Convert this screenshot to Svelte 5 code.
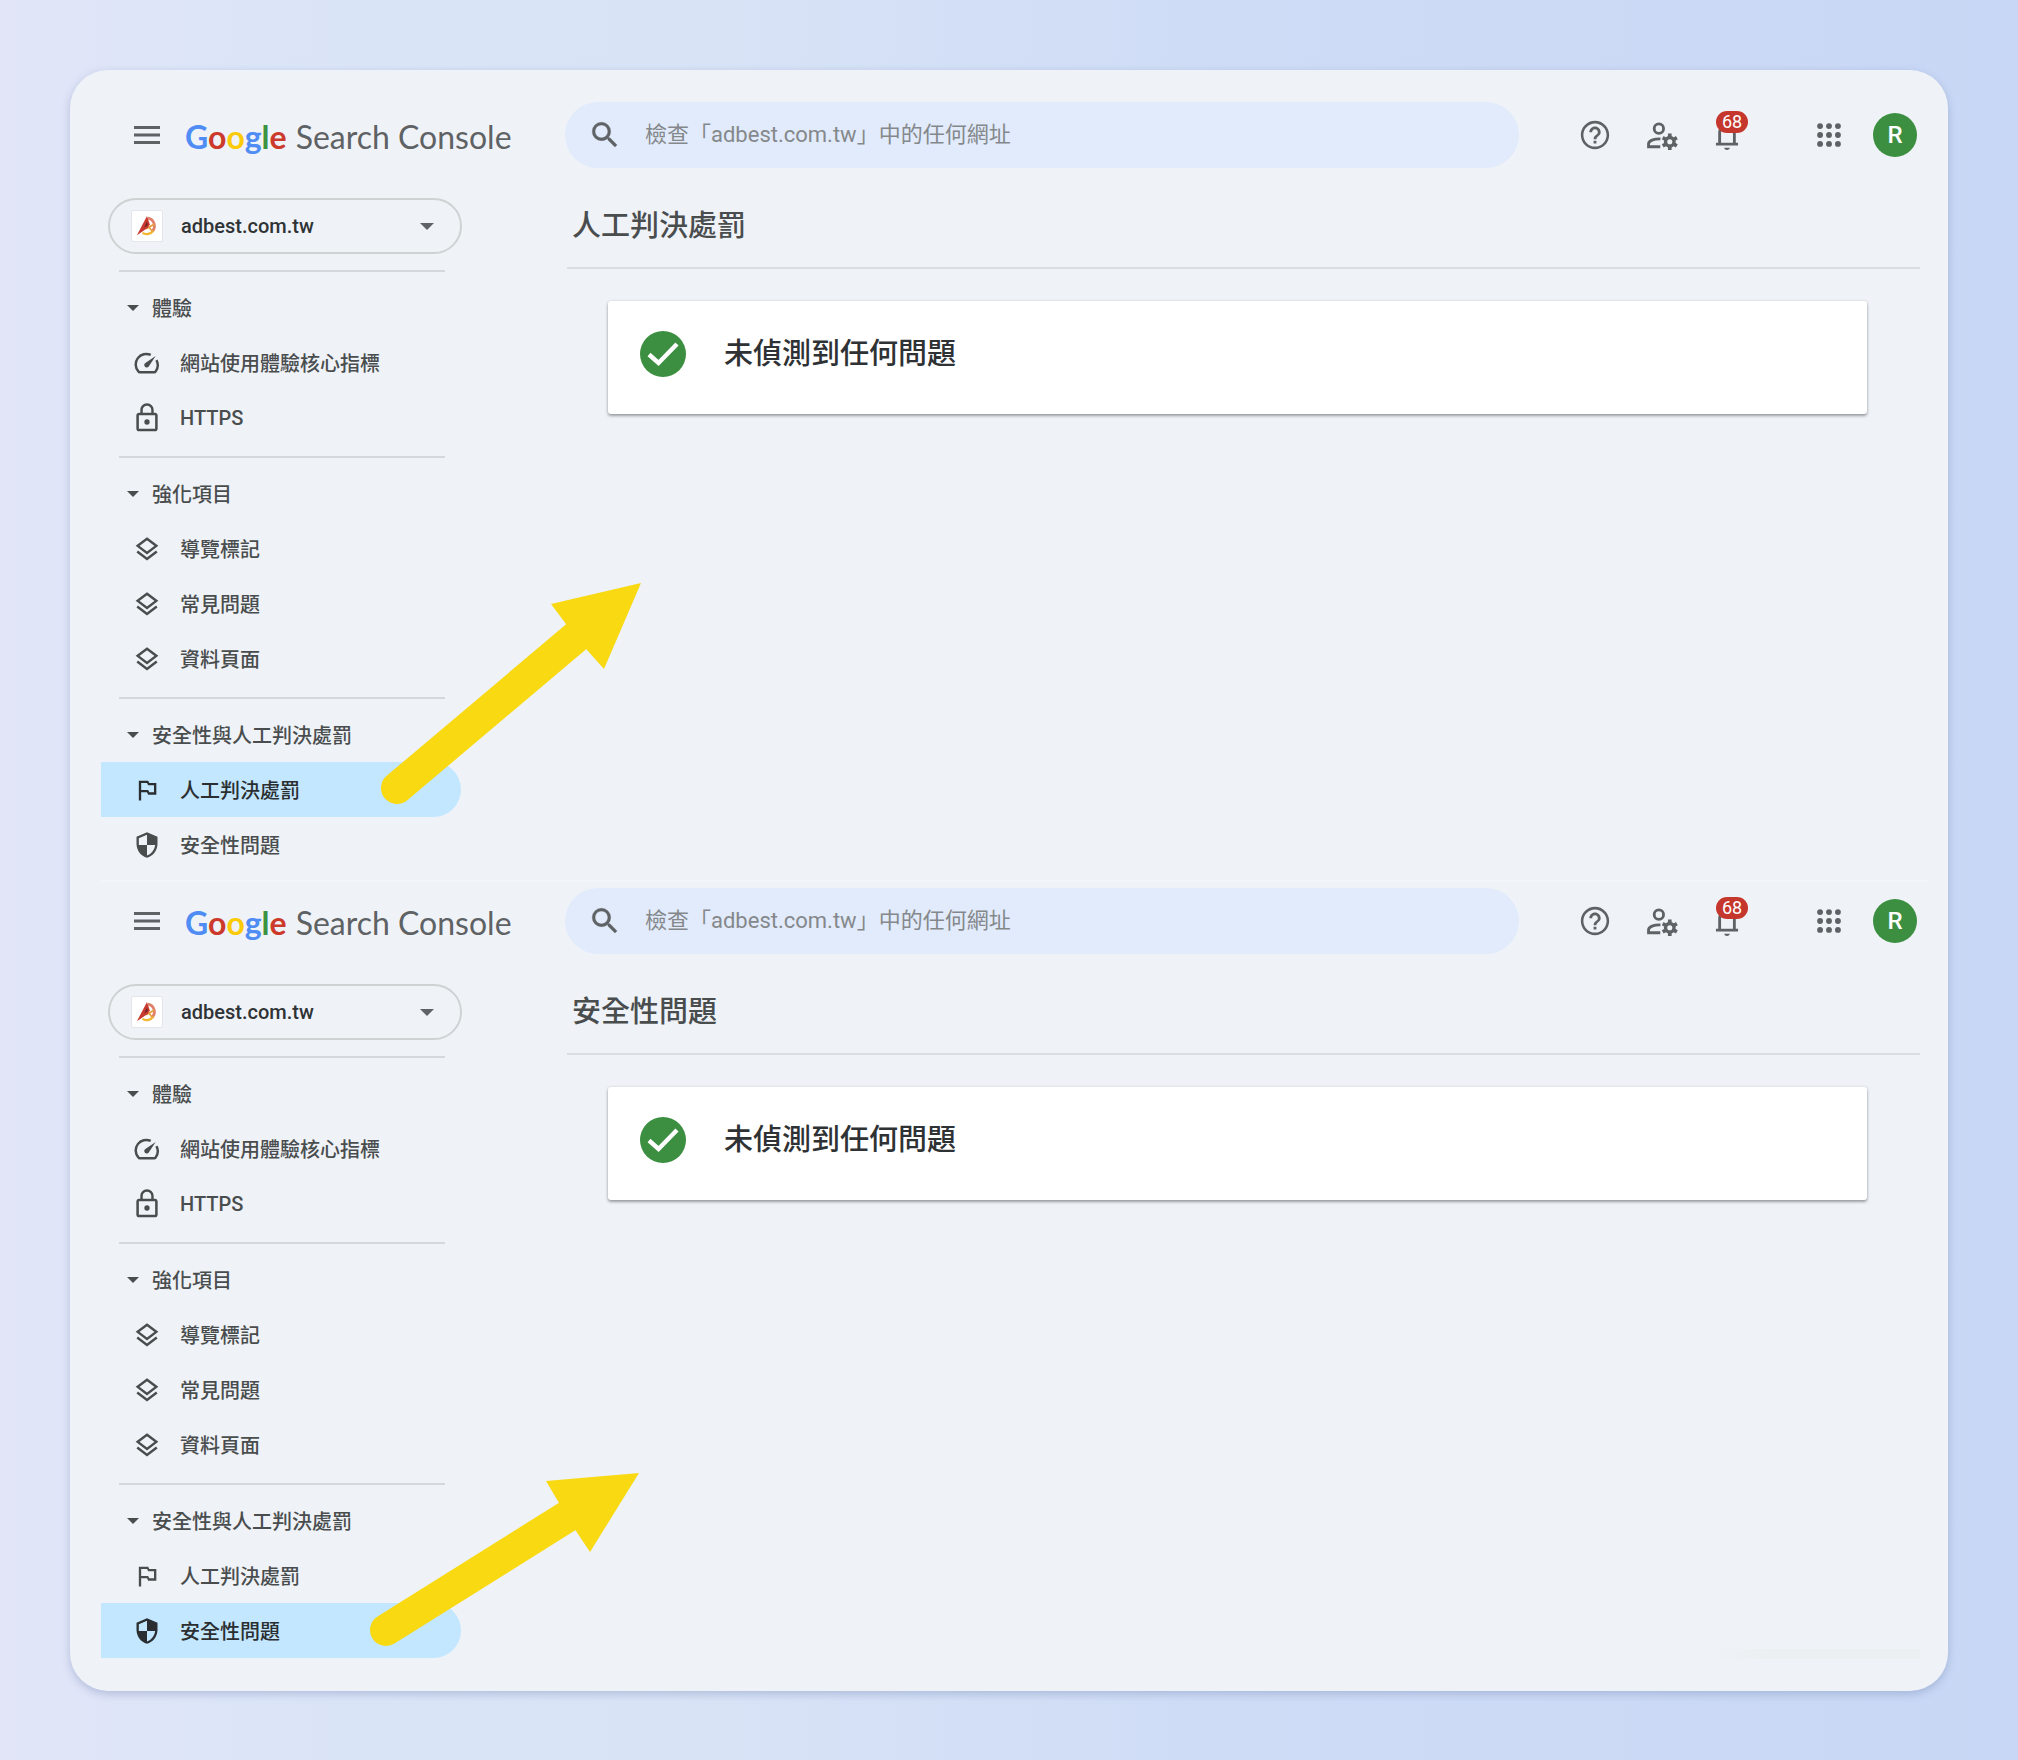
<script>
  const groups = [
    { title: '體驗', items: [
      { label: '網站使用體驗核心指標', icon: 'speed' },
      { label: 'HTTPS', icon: 'lock' },
    ] },
    { title: '強化項目', items: [
      { label: '導覽標記', icon: 'layers' },
      { label: '常見問題', icon: 'layers' },
      { label: '資料頁面', icon: 'layers' },
    ] },
    { title: '安全性與人工判決處罰', items: [
      { label: '人工判決處罰', icon: 'flag' },
      { label: '安全性問題', icon: 'shield' },
    ] },
  ];

  const panels = [
    { id: 'manual', page: '人工判決處罰', line: 'M26 214L206 62', head: '270,9 180,30 195,50 216,76 233,95' },
    { id: 'security', page: '安全性問題', line: 'M15 268L197 154', head: '268,111 175,119 188,141 205,169 219,190' },
  ];

  const logo = [['G', 'blue'], ['o', 'red'], ['o', 'yellow'], ['g', 'blue'], ['l', 'green'], ['e', 'red']];
  const dots = [5, 12, 19];
</script>

{#snippet navIcon(name)}
  {#if name === 'speed'}
    <svg class="i28" viewBox="0 0 24 24" aria-hidden="true">
      <path d="M15.200 4.500A9 9 0 0 0 4.600 18.600Q5 19.400 6 19.400H18Q19 19.400 19.400 18.600A9 9 0 0 0 20.100 9" transform="translate(0 .6)" fill="none" stroke="currentColor" stroke-width="2.100" />
      <path d="M19.400 6L10.600 12a2.100 2.100 0 1 0 2.900 2.900z" fill="currentColor" />
    </svg>
  {:else if name === 'lock'}
    <svg class="i32" viewBox="0 0 24 24" aria-hidden="true">
      <path d="M18 8h-1V6c0-2.800-2.200-5-5-5S7 3.200 7 6v2H6c-1.100 0-2 .9-2 2v10c0 1.100.9 2 2 2h12c1.100 0 2-.9 2-2V10c0-1.100-.9-2-2-2zM8.800 6c0-1.800 1.400-3.200 3.200-3.200s3.200 1.400 3.200 3.200v2H8.800V6zM18.100 20.100H5.900V9.900h12.200v10.200zM12 17a2 2 0 1 0 0-4 2 2 0 0 0 0 4z" fill="currentColor" fill-rule="evenodd" />
    </svg>
  {:else if name === 'layers'}
    <svg class="i28" viewBox="0 0 24 24" aria-hidden="true">
      <path d="M12 3.200L20 9.300L12 15.400L4 9.300zM3.600 14.200L12 20.600L20.400 14.200" fill="none" stroke="currentColor" stroke-width="2.100" />
    </svg>
  {:else if name === 'flag'}
    <svg class="i28" viewBox="0 0 24 24" aria-hidden="true">
      <path d="M14 6l-1-2H5v17h2v-7h5l1 2h7V6h-6zm4 8h-4l-1-2H7V6h5l1 2h5v6z" fill="currentColor" />
    </svg>
  {:else}
    <svg class="i28" viewBox="0 0 24 24" aria-hidden="true">
      <path d="M12 1L3 5v6c0 5.550 3.840 10.740 9 12 5.160-1.260 9-6.450 9-12V5l-9-4zm0 10.990h7c-.53 4.120-3.280 7.790-7 8.940V12H5V6.300l7-3.110v8.800z" fill="currentColor" />
    </svg>
  {/if}
{/snippet}

<div class="page">
  <div class="sheet">
    {#each panels as panel (panel.id)}
      <section class="panel">
        <header class="top">
          <div class="brand">
            <button class="plain menu" aria-label="選單">
              <svg viewBox="0 0 26 18" aria-hidden="true"><path d="M0 1.500H26M0 9H26M0 16.500H26" stroke="currentColor" stroke-width="3" /></svg>
            </button>
            <a class="logo" href="#home"><span class="google">{#each logo as [ch, tone]}<span class={tone}>{ch}</span>{/each}</span><span class="product">Search Console</span></a>
          </div>
          <label class="search">
            <svg viewBox="0 0 24 24" aria-hidden="true"><path d="M15.500 14h-.79l-.28-.27A6.470 6.470 0 0 0 16 9.500 6.500 6.500 0 1 0 9.500 16c1.610 0 3.090-.59 4.230-1.570l.27.28v.79l5 4.990L20.490 19l-4.990-5zm-6 0C7.010 14 5 11.990 5 9.500S7.010 5 9.500 5 14 7.010 14 9.500 11.990 14 9.500 14z" fill="currentColor" stroke="currentColor" stroke-width=".3" /></svg>
            <input type="text" aria-label="檢查網址" placeholder="檢查「adbest.com.tw」中的任何網址" />
          </label>
          <div class="tools">
            <button class="plain tool" aria-label="說明">
              <svg viewBox="0 0 24 24" aria-hidden="true"><path d="M11 18h2v-2h-2v2zm1-16C6.480 2 2 6.480 2 12s4.480 10 10 10 10-4.480 10-10S17.520 2 12 2zm0 18.200c-4.530 0-8.200-3.670-8.200-8.200S7.470 3.800 12 3.800s8.200 3.670 8.200 8.200-3.670 8.200-8.200 8.200zM12 6c-2.210 0-4 1.790-4 4h2c0-1.100.9-2 2-2s2 .9 2 2c0 2-3 1.750-3 5h2c0-2.250 3-2.500 3-5 0-2.210-1.790-4-4-4z" fill="currentColor" /></svg>
            </button>
            <button class="plain tool" aria-label="使用者設定">
              <svg viewBox="0 0 24 24" aria-hidden="true">
                <g fill="none" stroke="currentColor" stroke-width="2">
                  <circle cx="10.500" cy="7.500" r="3.300" />
                  <path d="M11.500 20.300H3.200V18.300C3.200 16 7 14.600 11.600 14.700" />
                  <circle cx="18.200" cy="16.800" r="3" stroke-width="2.400" />
                </g>
                <path d="M18.200 11v2.200M18.200 20.400v2.200M13.200 13.900l1.900 1.100M21.300 18.600l1.900 1.100M13.200 19.700l1.900-1.100M21.300 15l1.900-1.100" stroke="currentColor" stroke-width="2.600" />
              </svg>
            </button>
            <button class="plain tool" aria-label="通知">
              <svg viewBox="0 0 24 24" aria-hidden="true"><path d="M12 22.500c1.100 0 2-.6 2-1.500h-4c0 .9.9 1.500 2 1.500zM18.200 17.500V10.500c0-3.100-1.600-5.600-4.500-6.300V3.500h-3.400v.7C7.500 4.900 5.800 7.400 5.800 10.500v7H4.200v1.900h15.600v-1.900zM7.800 17.500V10.500C7.800 8 9.200 6 12 6s4.200 2 4.200 4.500v7z" fill="currentColor" fill-rule="evenodd" /></svg>
              <span class="badge">68</span>
            </button>
            <button class="plain tool apps" aria-label="應用程式">
              <svg viewBox="0 0 24 24" aria-hidden="true">
                {#each dots as cy}{#each dots as cx}<circle {cx} {cy} r="2.300" transform="translate(1.200 1.200) scale(.9)" fill="currentColor" />{/each}{/each}
              </svg>
            </button>
            <button class="plain tool" aria-label="帳戶"><span class="avatar">R</span></button>
          </div>
        </header>

        <div class="body">
          <aside>
            <button class="property">
              <span class="favicon">
                <svg viewBox="0 0 24 24" aria-hidden="true">
                  <path d="M13 3.500A8.500 8.500 0 0 1 17.500 18" fill="none" stroke="#e0806a" stroke-width="3" />
                  <path d="M7 19.500A9 9 0 0 0 19 17" fill="none" stroke="#f2b632" stroke-width="2.500" />
                  <path d="M11 15L20 10M13 12l5 6" stroke="#e8a040" stroke-width="2" />
                  <path d="M12 1L1 22L13 14L15 10z" fill="#c8392f" />
                  <path d="M12 7L9 14l4-3z" fill="#6d2226" />
                </svg>
              </span>
              <span class="domain">adbest.com.tw</span>
              <svg class="caret" viewBox="0 0 14 7" aria-hidden="true"><path d="M0 0H14L7 7z" fill="#5f6368" /></svg>
            </button>
            <nav>
              {#each groups as group}
                <div class="group">
                  <button class="plain heading">
                    <svg viewBox="0 0 12 6" aria-hidden="true"><path d="M0 0H12L6 6z" fill="currentColor" /></svg>
                    {group.title}
                  </button>
                  {#each group.items as item}
                    <a class="item" class:selected={item.label === panel.page} href="#{item.label}">
                      <span class="slot">{@render navIcon(item.icon)}</span>
                      {item.label}
                    </a>
                  {/each}
                </div>
              {/each}
            </nav>
          </aside>
          <main>
            <h1>{panel.page}</h1>
            <div class="status">
              <svg viewBox="0 0 46 46" aria-hidden="true">
                <circle cx="23" cy="23" r="23" fill="#3c8f40" />
                <path d="M9 23.500L18.500 32L37 13" fill="none" stroke="#fff" stroke-width="4.400" />
              </svg>
              <h2>未偵測到任何問題</h2>
            </div>
          </main>
        </div>

        <svg class="arrow" viewBox="0 0 290 300" aria-hidden="true">
          <path d={panel.line} stroke="#f8d912" stroke-width="32" stroke-linecap="round" />
          <polygon points={panel.head} fill="#f8d912" />
        </svg>
      </section>
    {/each}
  </div>
</div>

<style>
  :global(body) {
    margin: 0;
  }
  .page {
    box-sizing: border-box;
    min-height: 100vh;
    padding: 70px;
    background: linear-gradient(90deg, #e2e5f8 0%, #dce5f8 12%, #d8e3f6 35%, #cfdcf6 60%, #c8d7f5 100%);
    font-family: Roboto, "Noto Sans CJK TC", sans-serif;
    color: #4a4d4e;
  }
  .sheet {
    padding: 24px 20px 32px 31px;
    border-radius: 38px;
    background: #eff3f8;
    box-shadow: 0 3px 8px rgba(110, 130, 175, 0.4);
  }
  .panel {
    position: relative;
    padding-top: 8px;
  }
  .panel + .panel {
    margin-top: 7px;
    padding-top: 6px;
    border-top: 2px solid #f2f5fa;
  }
  .panel:last-child::after {
    content: '';
    position: absolute;
    right: 8px;
    bottom: 0;
    width: 210px;
    height: 10px;
    border-radius: 40px 0 0 0;
    background: linear-gradient(90deg, #eff3f8, #ebeff1 30%);
  }
  .plain {
    display: flex;
    align-items: center;
    padding: 0;
    border: 0;
    background: none;
    font: inherit;
    color: inherit;
  }
  svg {
    display: block;
    flex: none;
  }
  .top {
    display: flex;
    align-items: center;
    height: 66px;
    color: #5f6264;
  }
  .brand {
    box-sizing: border-box;
    display: flex;
    flex: none;
    align-items: center;
    gap: 25px;
    width: 464px;
    padding-left: 33px;
  }
  .menu svg {
    width: 26px;
    height: 18px;
  }
  .logo {
    display: flex;
    align-items: baseline;
    gap: 9px;
    padding-top: 4px;
    font-family: Lato, sans-serif;
    font-size: 32px;
    line-height: 40px;
    color: #5f6264;
    text-decoration: none;
    white-space: nowrap;
  }
  .google {
    font-weight: 700;
  }
  .blue { color: #4f8df5; }
  .red { color: #cc3a2c; }
  .yellow { color: #fbcb0a; }
  .green { color: #3c9443; }
  .search {
    display: flex;
    flex: 0 1 954px;
    align-items: center;
    gap: 23px;
    box-sizing: border-box;
    height: 66px;
    padding: 0 24px 0 23px;
    border-radius: 33px;
    background: #e1ebfb;
  }
  .search svg {
    width: 34px;
    height: 34px;
  }
  .search input {
    flex: 1;
    min-width: 0;
    padding: 0;
    border: 0;
    outline: 0;
    background: none;
    font: inherit;
    font-size: 22px;
    line-height: 32px;
  }
  .search input::placeholder {
    color: #85888b;
    opacity: 1;
  }
  .tools {
    display: flex;
    flex: none;
    margin-left: auto;
  }
  .tool {
    position: relative;
    justify-content: center;
    width: 66px;
    height: 66px;
  }
  .tool svg {
    width: 34px;
    height: 34px;
  }
  .apps {
    margin-left: 36px;
  }
  .badge {
    position: absolute;
    top: 9px;
    left: 22px;
    width: 32px;
    border-radius: 11px;
    background: #c5362c;
    color: #fff;
    font-size: 18px;
    line-height: 22px;
    text-align: center;
  }
  .avatar {
    width: 44px;
    border-radius: 50%;
    background: #3c8f40;
    color: #fff;
    font-size: 24px;
    font-weight: 500;
    line-height: 44px;
    text-align: center;
  }
  .body {
    display: flex;
    gap: 106px;
    padding-right: 8px;
  }
  aside {
    flex: none;
    width: 360px;
    padding-top: 30px;
  }
  .property {
    box-sizing: border-box;
    display: flex;
    align-items: center;
    width: 354px;
    height: 56px;
    margin: 0 0 16px 7px;
    padding: 0 26px 0 21px;
    border: 2px solid #cdd2d3;
    border-radius: 28px;
    background: none;
    font: inherit;
    color: #303336;
  }
  .favicon {
    padding: 4px;
    border: 1px solid #e3e6ea;
    border-radius: 2px;
    background: #fff;
  }
  .favicon svg {
    width: 22px;
    height: 22px;
  }
  .domain {
    flex: 1;
    padding-left: 18px;
    font-size: 20px;
    font-weight: 500;
    text-align: left;
  }
  .caret {
    width: 14px;
    height: 7px;
  }
  .group {
    position: relative;
    padding-top: 10px;
  }
  .group::before {
    content: '';
    position: absolute;
    top: 0;
    left: 18px;
    right: 16px;
    height: 2px;
    background: #d3d8db;
  }
  .group + .group {
    margin-top: 11px;
  }
  .heading,
  .item {
    box-sizing: border-box;
    width: 100%;
    height: 55px;
    font-size: 20px;
    font-weight: 500;
    white-space: nowrap;
  }
  .heading {
    gap: 13px;
    padding-left: 26px;
  }
  .heading svg {
    width: 12px;
    height: 6px;
  }
  .item {
    display: flex;
    align-items: center;
    gap: 17px;
    padding-left: 30px;
    color: inherit;
    text-decoration: none;
  }
  .slot {
    display: grid;
    place-items: center;
    width: 32px;
    height: 32px;
  }
  .i28 {
    width: 28px;
    height: 28px;
  }
  .i32 {
    width: 32px;
    height: 32px;
  }
  .selected {
    border-radius: 0 28px 28px 0;
    background: #c2e7ff;
    color: #2b2e30;
  }
  nav {
    padding-bottom: 1px;
  }
  main {
    flex: 1;
    min-width: 0;
  }
  h1,
  h2 {
    margin: 0;
    font-size: 29px;
    font-weight: 500;
    line-height: 44px;
  }
  h1 {
    padding: 36px 5px 19px;
    border-bottom: 2px solid #d9dee1;
  }
  .status {
    display: flex;
    align-items: center;
    gap: 38px;
    margin: 32px 53px 0 41px;
    padding: 30px 32px 37px;
    border-radius: 3px;
    background: #fff;
    box-shadow: 0 2px 3px rgba(60, 64, 67, 0.45), 0 0 3px rgba(60, 64, 67, 0.15);
  }
  .status svg {
    width: 46px;
    height: 46px;
  }
  h2 {
    color: #2f3234;
  }
  .arrow {
    position: absolute;
    top: 480px;
    left: 270px;
    width: 290px;
    height: 300px;
    overflow: visible;
    pointer-events: none;
  }
</style>
